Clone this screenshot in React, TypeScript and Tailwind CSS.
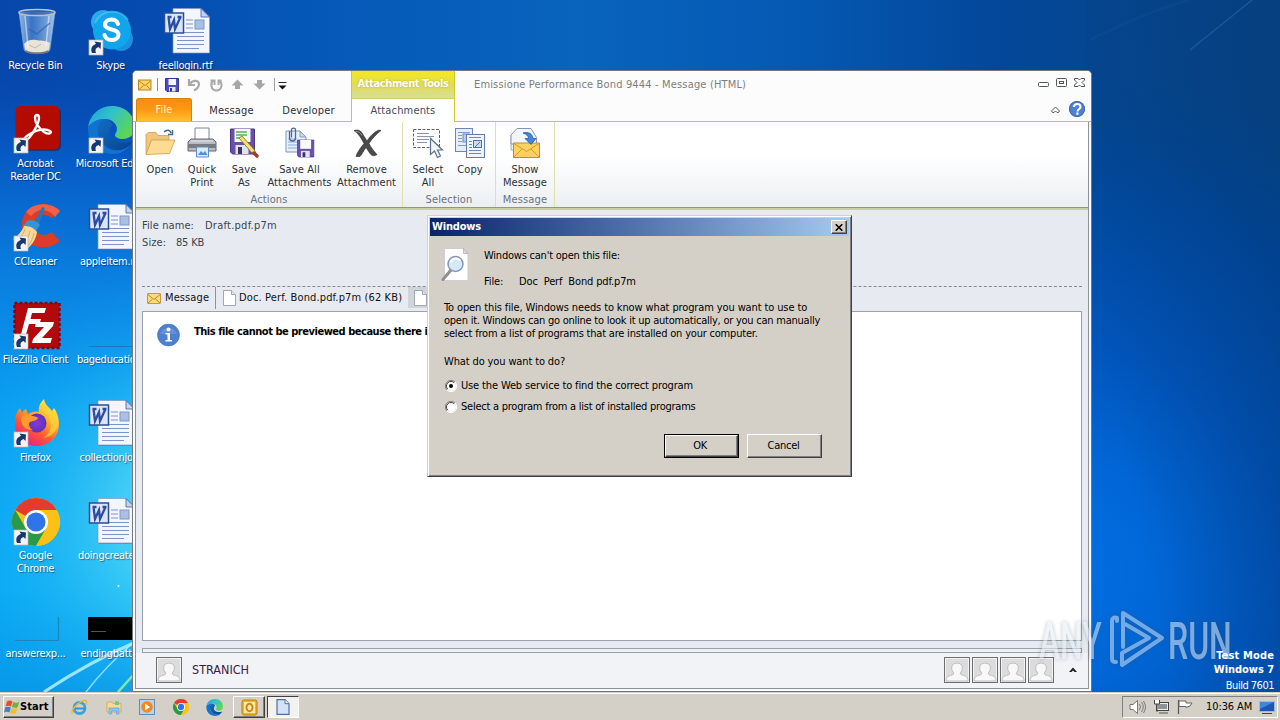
import type { ReactNode } from "react";

/* ---------- shared bits ---------- */

function Shortcut() {
  return (
    <g>
      <rect x="2" y="32" width="14" height="15" fill="#f4f4f4" stroke="#b8b8b8" strokeWidth=".7" />
      <path d="M5 45c-2-5 .5-8 4-9l-1.500-2.500 6.500 1-.5 6.500-2-2C8.500 40 8 42 9 45z" fill="#17376e" />
    </g>
  );
}

function Svg48({ children }: { children?: ReactNode }) {
  return (
    <svg width="48" height="48" viewBox="0 0 48 48" className="block shrink-0 overflow-visible">
      {children}
    </svg>
  );
}

function RecycleBin() {
  return (
    <Svg48>
      <defs>
        <linearGradient id="bin" x1="0" x2="1">
          <stop offset="0" stopColor="#b9d3ef" stopOpacity=".8" />
          <stop offset=".35" stopColor="#4f86cf" stopOpacity=".7" />
          <stop offset=".7" stopColor="#7fa9dd" stopOpacity=".8" />
          <stop offset="1" stopColor="#cfe2f5" stopOpacity=".8" />
        </linearGradient>
      </defs>
      <path d="M7 4h36l-5 37c-.5 3-3 4-13 4s-12.500-1-13-4z" fill="url(#bin)" stroke="#8fb0d4" strokeWidth=".6" />
      <path d="M12 36c3-4 8-5 12-4s9 0 14 3l-1 6c-1 3-5 4-12 4s-11-1-12-4z" fill="#e9e4da" />
      <path d="M17 37l6 3 6-4" stroke="#c2b8a6" fill="none" />
      <path d="M13 8l3 32M37 8l-3 30" stroke="#ffffff" strokeOpacity=".5" strokeWidth="1.500" />
      <path d="M17 21l8 5 8-7 5-4" stroke="#2f62b0" strokeOpacity=".7" fill="none" strokeWidth="1.500" />
      <ellipse cx="25" cy="4.500" rx="18" ry="3" fill="#2d5ea6" fillOpacity=".6" stroke="#b9c3cf" strokeWidth="1.500" />
      <path d="M14 43c4 3 18 3 22 0" stroke="#777" strokeWidth="2" fill="none" />
    </Svg48>
  );
}

function Skype() {
  return (
    <Svg48>
      <circle cx="16" cy="14" r="12" fill="#29a8ea" />
      <circle cx="34" cy="31" r="12" fill="#1c8fe0" />
      <circle cx="25" cy="22.500" r="19" fill="#11a5ec" />
      <path d="M8 15a19 19 0 0 1 33-3" stroke="#5cc9f5" strokeWidth="2" fill="none" opacity=".6" />
      <path d="M31 16c-1-3-3.500-4.500-6.500-4.500-3.500 0-6.500 1.700-6.500 5 0 6.500 13.500 3.500 13.500 10 0 3.500-3 5.500-7 5.500-3.500 0-6-1.500-7-5" stroke="#fff" strokeWidth="4" fill="none" strokeLinecap="round" />
      <Shortcut />
    </Svg48>
  );
}

function WordDoc() {
  return (
    <Svg48>
      <path d="M12 1h26l10 8v37H12z" fill="#1b3c78" opacity=".35" />
      <path d="M11 .5h28l8.500 8.500v36H11z" fill="#f3f6fd" stroke="#8296c4" strokeWidth=".7" />
      <path d="M39 .5v8.500h8.500z" fill="#c4d3ef" stroke="#3e5a9c" strokeWidth=".8" />
      <rect x="33" y="12" width="9" height="9" fill="#aabfe4" stroke="#7f97c8" />
      <path d="M24 12h7M24 16h7M24 20h7M15 24.500h27M15 28.500h27M15 32.500h27M15 36.500h27M15 40.500h22" stroke="#7d93c9" strokeWidth="1" />
      <rect x="2.500" y="5" width="19" height="20" fill="#dbe5f8" stroke="#2c4c9b" strokeWidth="1.500" />
      <path d="M5.500 9h4M6.500 9l1.500 12L12 12l1 9 5.500-12M15.500 9h4" stroke="#2c4da2" strokeWidth="2.300" fill="none" />
    </Svg48>
  );
}

function Acrobat() {
  return (
    <Svg48>
      <rect x="5" y="2" width="44" height="43" rx="5" fill="#3a1020" opacity=".5" />
      <rect x="3.500" y="0" width="44" height="43" rx="5" fill="#b30b00" />
      <path d="M12 33c2-4 7-6 12-8s11-2 14 0-2 4-6 1c-5-4-9-9-9-14 0-4 4-4 4 0 0 5-5 14-10 20-2 2-5 3-5 1z" fill="none" stroke="#fff" strokeWidth="2.300" strokeLinejoin="round" />
      <Shortcut />
    </Svg48>
  );
}

function EdgeArt() {
  return (
    <g>
      <defs>
        <linearGradient id="edgeTop" x1="0" y1="0" x2="1" y2=".5">
          <stop offset="0" stopColor="#1b9de2" />
          <stop offset=".5" stopColor="#33c2c8" />
          <stop offset="1" stopColor="#5cd653" />
        </linearGradient>
        <linearGradient id="edgeLow" x1="0" y1="0" x2="1" y2="1">
          <stop offset="0" stopColor="#0f6fc4" />
          <stop offset="1" stopColor="#0a3f8e" />
        </linearGradient>
      </defs>
      <path d="M1 21C3 8 13 0 25 0c14 0 23 10 23 21 0 7-5 12-12 12-5 0-8-2-8-4s2-3 2-6c0-5-5-10-12-10-8 0-14 5-17 8z" fill="url(#edgeTop)" />
      <path d="M1 21c3-4 8-8 16-8-4 2-6 7-6 12 0 9 7 17 15 19 6 1 12-1 17-5-4 6-10 9-17 9C12 48 1 37 1 24z" fill="#1173cf" />
      <path d="M17 13c-5 2-7 8-6 14 2 9 8 16 17 17s15-4 18-9c-9 4-20 1-23-5-2-5 0-8 3-11-2-4-5-6-9-6z" fill="url(#edgeLow)" />
    </g>
  );
}

function EdgeIcon() {
  return (
    <Svg48>
      <EdgeArt />
      <Shortcut />
    </Svg48>
  );
}

function CCleaner() {
  return (
    <Svg48>
      <path d="M48 7C38-3 21-1 14 8c-6 8-6 20 0 28 8 9 24 10 34 1l-8-9c-5 4-11 4-15 0-4-5-4-10 0-15 4-3 10-3 14 1z" fill="#dc3d27" />
      <path d="M48 7C38-3 21-1 14 8l5 4c7-8 17-8 24 1z" fill="#f0604a" />
      <path d="M30 3l3 1-7 19-5-2z" fill="#2b74b8" />
      <path d="M15 17c4-2 11 0 13 4l-4 6c-3-3-8-5-13-5z" fill="#3793d2" />
      <path d="M12 22c6 0 10 2 13 6-1 7-5 13-10 17-4-5-9-8-14-10 5-3 9-8 11-13z" fill="#f5d99a" />
      <path d="M13 25c-2 6-5 9-8 12M18 27c-1 6-4 10-7 13M22 29c-1 5-3 9-6 13" stroke="#d9ae5a" strokeWidth="1" fill="none" />
      <Shortcut />
    </Svg48>
  );
}

function FileZilla() {
  return (
    <Svg48>
      <rect x="2.500" y="1" width="45" height="45" fill="#b3080c" stroke="#8b0508" strokeWidth="2.500" strokeDasharray="3 2" />
      <path d="M16 6h18l-1.500 5H20l-1.500 6H29l-1.500 5H17l-4 14H8z" fill="#fff" />
      <path d="M24 20h18l-1 4-11 12h10l-1.500 5H20l1-4 11-12h-9z" fill="#fff" />
      <Shortcut />
    </Svg48>
  );
}

function Firefox() {
  return (
    <Svg48>
      <defs>
        <linearGradient id="fox" x1=".8" y1="0" x2=".2" y2="1">
          <stop offset="0" stopColor="#fff44f" />
          <stop offset=".35" stopColor="#ffb52a" />
          <stop offset=".65" stopColor="#ff5634" />
          <stop offset="1" stopColor="#e3168f" />
        </linearGradient>
        <radialGradient id="globe">
          <stop offset="0" stopColor="#8a35e0" />
          <stop offset="1" stopColor="#5b34b5" />
        </radialGradient>
      </defs>
      <path d="M3 20c0-5 2-8 5-12l2 5c1-2 2-3 4-4l2 5c3-2 8-3 11-2-1-5 1-9 5-13 1 6 5 8 8 12l2-3c3 4 5 10 5 16 0 13-10 22-22 22S3 37 3 25z" fill="url(#fox)" />
      <circle cx="25" cy="23" r="9.500" fill="url(#globe)" />
      <path d="M9 17c4-3 8-3 11-1 3 0 5 1 6 2-1 3-6 3-8 4-2 2-1 6 3 8-7 1-13-5-12-13z" fill="#ff9a2e" />
      <path d="M30 4c0 8 9 11 9 21 0 6-4 11-8 13 9-1 15-8 15-16 0-8-8-10-10-14z" fill="#ffd33d" opacity=".75" />
      <Shortcut />
    </Svg48>
  );
}

function ChromeArt() {
  return (
    <g>
      <circle cx="24" cy="24" r="24" fill="#fbc116" />
      <path d="M24 24L3.200 12A24 24 0 0 1 44.800 12z" fill="#e33b2e" />
      <path d="M3.200 12A24 24 0 0 0 24 48L34.500 30 24 24 13.600 30z" fill="#2a9a48" />
      <path d="M24 12h20.800A24 24 0 0 1 24 48l10.400-18z" fill="#fbc116" />
      <circle cx="24" cy="24" r="12" fill="#fff" />
      <circle cx="24" cy="24" r="9.500" fill="#2f74e8" />
    </g>
  );
}

function ChromeIcon() {
  return (
    <Svg48>
      <ChromeArt />
      <Shortcut />
    </Svg48>
  );
}

/* ---------- desktop ---------- */

type DesktopItem = { label: string; icon: ReactNode };

const columns: DesktopItem[][] = [
  [
    { label: "Recycle Bin", icon: <RecycleBin /> },
    { label: "Acrobat\nReader DC", icon: <Acrobat /> },
    { label: "CCleaner", icon: <CCleaner /> },
    { label: "FileZilla Client", icon: <FileZilla /> },
    { label: "Firefox", icon: <Firefox /> },
    { label: "Google\nChrome", icon: <ChromeIcon /> },
    {
      label: "answerexp...",
      icon: (
        <Svg48>
          <path d="M3 44.500h44M46.500 21v23" stroke="#1c86b8" strokeWidth="1.200" />
        </Svg48>
      ),
    },
  ],
  [
    { label: "Skype", icon: <Skype /> },
    { label: "Microsoft Edge", icon: <EdgeIcon /> },
    { label: "appleitem.rtf", icon: <WordDoc /> },
    {
      label: "bageducatio...",
      icon: (
        <Svg48>
          <path d="M2 44.500h45" stroke="#1479bd" strokeWidth="1.200" />
        </Svg48>
      ),
    },
    { label: "collectionjo...", icon: <WordDoc /> },
    { label: "doingcreate...", icon: <WordDoc /> },
    {
      label: "endingbatt...",
      icon: (
        <Svg48>
          <rect x="1" y="21" width="46" height="23" fill="#000" />
          <path d="M4 35.500h15" stroke="#555" />
        </Svg48>
      ),
    },
  ],
  [{ label: "feellogin.rtf", icon: <WordDoc /> }],
];

function Wallpaper() {
  return (
    <svg width="1280" height="692" viewBox="0 0 1280 692" className="absolute inset-0">
      <defs>
        <linearGradient id="sky" x1="0" x2="1280" gradientUnits="userSpaceOnUse">
          <stop offset="0" stopColor="#0747ab" />
          <stop offset=".12" stopColor="#054bb0" />
          <stop offset=".2" stopColor="#0555b6" />
          <stop offset=".45" stopColor="#0864bd" />
          <stop offset=".62" stopColor="#0559b3" />
          <stop offset=".78" stopColor="#03479a" />
          <stop offset="1" stopColor="#0b4680" />
        </linearGradient>
        <linearGradient id="leftSky" y2="692" gradientUnits="userSpaceOnUse" x2="0">
          <stop offset="0" stopColor="#0747ab" stopOpacity="0" />
          <stop offset=".1" stopColor="#074bb1" stopOpacity="0" />
          <stop offset=".2" stopColor="#0655c0" />
          <stop offset=".4" stopColor="#0a7fe0" />
          <stop offset=".6" stopColor="#089ff2" />
          <stop offset=".85" stopColor="#08aaf5" />
          <stop offset="1" stopColor="#0798e8" />
        </linearGradient>
        <radialGradient id="leftGlow" cx="190" cy="520" r="260" gradientUnits="userSpaceOnUse">
          <stop offset="0" stopColor="#66e4fa" />
          <stop offset=".3" stopColor="#4cd6f6" stopOpacity=".75" />
          <stop offset=".7" stopColor="#22b8f5" stopOpacity=".3" />
          <stop offset="1" stopColor="#10a0f0" stopOpacity="0" />
        </radialGradient>
        <radialGradient id="rightSky" cx="1060" cy="570" r="500" gradientUnits="userSpaceOnUse">
          <stop offset="0" stopColor="#0270e4" />
          <stop offset=".22" stopColor="#0166d6" />
          <stop offset=".45" stopColor="#0155bb" />
          <stop offset=".75" stopColor="#014a9f" />
          <stop offset="1" stopColor="#024590" stopOpacity="0" />
        </radialGradient>
        <linearGradient id="rightEdge" x1="1090" x2="1280" y1="300" y2="260" gradientUnits="userSpaceOnUse">
          <stop offset="0" stopColor="#003a80" stopOpacity="0" />
          <stop offset="1" stopColor="#003a80" stopOpacity=".5" />
        </linearGradient>
      </defs>
      <rect width="1280" height="692" fill="url(#sky)" />
      <rect y="70" width="140" height="622" fill="url(#leftSky)" />
      <rect y="240" width="140" height="452" fill="url(#leftGlow)" />
      <rect x="1085" y="70" width="195" height="622" fill="url(#rightSky)" />
      <rect x="1085" width="195" height="692" fill="url(#rightEdge)" />
      <path d="M44 692q45-30 92-50" stroke="#bff4ff" strokeWidth="3" fill="none" opacity=".8" />
      <path d="M86 692q20-26 48-50" stroke="#a5efff" strokeWidth="1.500" fill="none" opacity=".8" />
      <path d="M118 692l18-20" stroke="#8ff0a0" strokeWidth="2.500" opacity=".9" />
      <path d="M1190 50L1252 0" stroke="#5a9bd0" strokeWidth="1.500" opacity=".25" />
      <path d="M1090 40q60-30 100-40" stroke="#3a7cc0" strokeWidth="3" fill="none" opacity=".08" />
      <circle cx="118.500" cy="586" r="1" fill="#d7fbff" />
    </svg>
  );
}

function DesktopIcons() {
  return (
    <div className="relative -ml-0.5 flex">
      {columns.map((col, i) => (
        <div key={i} className="flex w-[75px] flex-col">
          {col.map((item) => (
            <div key={item.label} className="flex h-[98px] flex-col items-center pt-2">
              {item.icon}
              <span className="mt-[3px] text-center text-[11px] leading-[13px] tracking-[-0.25px] whitespace-pre text-white [text-shadow:1px_1px_1px_rgba(0,0,0,0.45)]">
                {item.label}
              </span>
            </div>
          ))}
        </div>
      ))}
    </div>
  );
}

/* ---------- ribbon icons ---------- */

function Svg32({ children }: { children: ReactNode }) {
  return (
    <svg width="32" height="32" viewBox="0 0 32 32" className="block shrink-0">
      {children}
    </svg>
  );
}

function FloppyShape({ x, y, s }: { x: number; y: number; s: number }) {
  return (
    <g transform={`translate(${x} ${y}) scale(${s})`}>
      <path d="M0 0h24v25H2l-2-2z" fill="#6b4fa8" stroke="#4c3585" />
      <rect x="4" y="0" width="16" height="13" fill="#f4fbf4" />
      <rect x="5" y="16" width="13" height="9" fill="#dfe3ee" />
      <rect x="7.500" y="18" width="4" height="7" fill="#3f3560" />
    </g>
  );
}

const icons = {
  open: (
    <Svg32>
      <path d="M2 27V7.500l2-2h8l2 3h11v4z" fill="#efc67c" stroke="#cf9f52" strokeWidth=".8" />
      <path d="M7.500 13H31l-5.500 13.500L2 27.500z" fill="#fcdc93" stroke="#cf9a45" strokeWidth=".8" />
      <path d="M20 5c3-3 6-2 7 1M28.500 3v4.500H24" stroke="#44698f" strokeWidth="1.500" fill="none" />
    </Svg32>
  ),
  print: (
    <Svg32>
      <path d="M9 1h14v12H9z" fill="#fff" stroke="#7d8694" />
      <path d="M5 12h22l3 3v9H2v-9z" fill="#b9bcc2" stroke="#62666d" />
      <path d="M2 17h28v4H2z" fill="#777b82" />
      <path d="M5 14h22" stroke="#e8eaee" />
      <path d="M10.500 20h12v10h-12z" fill="#d7ebfb" stroke="#5f8fbf" />
      <path d="M12 28l3-4 2 2 2-2 2.500 4z" fill="#4d95d9" />
    </Svg32>
  ),
  saveAs: (
    <Svg32>
      <FloppyShape x={2.500} y={2} s={1} />
      <path d="M8 5h11M8 8h11M8 11h8" stroke="#54b060" strokeWidth="1.500" />
      <path d="M11 11l13 15 4 1.500-1.500-4.500L14 9z" fill="#f8e073" stroke="#8f7420" strokeWidth=".9" />
      <path d="M26 26l3 3" stroke="#a03b28" strokeWidth="3.500" strokeLinecap="round" />
    </Svg32>
  ),
  saveAll: (
    <Svg32>
      <path d="M2 4h14l6 6v15H2z" fill="#e8f0fb" stroke="#7c93ba" />
      <path d="M4 12h9M4 15h9M4 18h9M4 21h9" stroke="#8ca8d3" />
      <path d="M16 4v6h6z" fill="#c5d5ef" stroke="#7c93ba" strokeWidth=".8" />
      <path d="M5.500 4v7c0 4 6 4 6 0V3c0-2.500-4-2.500-4 0v7.500" stroke="#4c6891" strokeWidth="1.300" fill="none" />
      <FloppyShape x={13.500} y={13} s={0.68} />
    </Svg32>
  ),
  remove: (
    <Svg32>
      <path d="M3 3.500c4-1 6-.5 8 2.500l5 8c3-5 7-9 12-11l2 .5c-5 4-9 8-12 13 2 4 5 8 8 11-3 2-5 1.500-7-1l-4-6c-3 4-4 7-6 9H5c1-4 4-8 8-13C10 11 8 7 3 3.500z" fill="#4a4a4a" stroke="#2e2e2e" strokeWidth=".6" />
      <path d="M5 4.500c3 0 4 1 6 4" stroke="#999" fill="none" />
    </Svg32>
  ),
  select: (
    <Svg32>
      <rect x="1.500" y="2.500" width="26" height="18" fill="#fff" stroke="#59606c" strokeDasharray="3 1.500" />
      <path d="M5 6.500h12M5 9.500h17M5 12.500h12M5 15.500h10" stroke="#8a95aa" />
      <path d="M18.500 11.500v16l4-3.500 3 6.500 3-1.500-3-6h5z" fill="#f2f5fb" stroke="#59708f" strokeWidth="1.200" />
    </Svg32>
  ),
  copy: (
    <Svg32>
      <rect x="1.500" y="1.500" width="17" height="23" fill="#e5eefa" stroke="#6c87ae" />
      <path d="M4 5.500h12M4 8.500h4M4 11.500h4M4 14.500h4M4 18.500h8" stroke="#809cc4" />
      <rect x="9" y="7" width="6" height="8" fill="#b8cdec" stroke="#5a7aa8" strokeWidth=".8" />
      <rect x="12.500" y="7.500" width="18" height="23" fill="#f0f5fd" stroke="#5f7ba6" />
      <path d="M15 10.500h12M15 23.500h12M15 26.500h12M15 14.500h3M15 17.500h3M15 20.500h3" stroke="#6c8ab8" />
      <rect x="19.500" y="13.500" width="8" height="7" fill="#c9daf2" stroke="#54739f" />
      <path d="M21 20l5-5" stroke="#54739f" />
    </Svg32>
  ),
  show: (
    <Svg32>
      <path d="M2 8v15h4V15z" fill="#e8eef8" stroke="#8b9cb8" strokeWidth=".8" />
      <path d="M8 1.500h14l5.500 9V17H2V8z" fill="#f2f6fc" stroke="#8796b0" />
      <path d="M4.500 16h26v14.500h-26z" fill="#fbd25d" stroke="#c28d28" />
      <path d="M5 16.500l12.500 8 12.500-8M5 30l8-8M30 30l-8-8" stroke="#cf9a30" fill="none" />
      <path d="M14 6c6-1.500 9.500 1 10 5.500h3L22 17.500l-6-6h3.500c0-2.500-2-4.500-5.500-5.500z" fill="#4384dc" stroke="#2457a8" strokeWidth=".8" />
    </Svg32>
  ),
};

function MailIcon() {
  return (
    <svg width="14" height="12" viewBox="0 0 14 12" className="block shrink-0">
      <rect x=".5" y=".5" width="13" height="10" rx=".5" fill="#fbdc7c" stroke="#c49a3e" />
      <path d="M1 1.500l6 5 6-5M1 10l4.500-4M13 10L8.500 6" stroke="#b77f1d" fill="none" strokeWidth=".9" />
    </svg>
  );
}

function PageIcon() {
  return (
    <svg width="13" height="16" viewBox="0 0 13 16" className="block shrink-0">
      <path d="M.5.500h8l4 4v11H.5z" fill="#fff" stroke="#a3a8b0" />
      <path d="M8.500.500v4h4" fill="#e4e6ea" stroke="#a3a8b0" />
    </svg>
  );
}

/* ---------- message window ---------- */

function RibbonButton({ icon, lines, width }: { icon: ReactNode; lines: string[]; width: string }) {
  return (
    <button className={`flex flex-col items-center ${width}`}>
      {icon}
      <span className="mt-1 flex flex-col items-center whitespace-nowrap text-[11px] leading-[13px] tracking-[0.1px] text-[#2c2f36]">
        {lines.map((l) => (
          <span key={l}>{l}</span>
        ))}
      </span>
    </button>
  );
}

function RibbonGroup({ title, width, pad, children }: { title: string; width: string; pad: string; children: ReactNode }) {
  return (
    <div className={`flex h-full shrink-0 flex-col border-r border-[#dfe0b0] ${width}`}>
      <div className={`flex h-[71px] pt-[5px] ${pad}`}>{children}</div>
      <div className="text-center text-[11px] leading-[14px] tracking-[0.15px] text-[#67717f]">{title}</div>
    </div>
  );
}

function QuickAccess() {
  return (
    <div className="flex h-[27px] items-center pl-[5px]">
      <svg width="160" height="16" viewBox="0 0 160 16" className="block">
        <g transform="translate(0 2.500)">
          <rect x=".5" y=".5" width="12.500" height="10" fill="#fbd465" stroke="#b98724" />
          <path d="M1 1.500l6 4.500 5.500-4.500M1 10l4.500-4M12.500 10L8.500 6" stroke="#b77f1d" fill="none" strokeWidth=".9" />
        </g>
        <path d="M19.500 1v13" stroke="#8b8f96" />
        <path d="M27.500 1.500h13v13H29l-1.500-1.500z" fill="#4b50b8" stroke="#33378e" />
        <rect x="30.500" y="2" width="7.500" height="6" fill="#f5f6fc" />
        <rect x="31" y="10" width="6.500" height="4.500" fill="#e2e4f0" />
        <rect x="32" y="11" width="2" height="3.500" fill="#33378e" />
        <path d="M51 2v6h6M51.500 7.500C54 3 61 2.500 61 7c0 3-2 5-5 6.500" stroke="#a9a9a9" strokeWidth="2.200" fill="none" />
        <path d="M75 3.500c-3 3-2 9.500 3 10s7.500-6 3.500-9.500M72.500 3.500h4V8M80.500 8V3.500h3" stroke="#a9a9a9" strokeWidth="2" fill="none" />
        <path d="M99.500 2.500l6 6h-3.500v3.500h-5V8.500h-3.500z" fill="#a6a6a6" />
        <path d="M121.500 12.500l6-6h-3.500V3h-5v3.500h-3.500z" fill="#a6a6a6" />
        <path d="M136.500 1v13" stroke="#9a9da3" />
        <path d="M140.500 5.500h8" stroke="#222" strokeWidth="1.200" />
        <path d="M140.500 8.500h8l-4 4z" fill="#111" />
      </svg>
    </div>
  );
}

function TitleArea() {
  return (
    <div className="flex h-[51px] shrink-0 bg-[#fcfcfd] text-[11px] tracking-[0.15px]">
      <div className="flex w-[218px] flex-col border-b border-[#cdc92a]">
        <QuickAccess />
        <div className="flex flex-1 items-stretch pl-[3px] text-[#2c2f36]">
          <div className="flex w-14 items-center justify-center rounded-t-[3px] border border-b-0 border-[#d98008] bg-linear-to-b from-[#fb8a12] via-[#fd9a12] to-[#ffc02e] pt-px text-[#fff3d0]">
            File
          </div>
          <div className="flex w-[79px] items-center justify-center pt-[3px]">Message</div>
          <div className="flex w-[75px] items-center justify-center pt-[3px]">Developer</div>
        </div>
      </div>
      <div className="flex w-[104px] flex-col border-x border-[#cdc92a]">
        <div className="h-7 shrink-0 border-b border-[#d3cf62] bg-linear-to-b from-[#f5e90f] via-[#e2dc50] to-[#d9de96] text-center text-[11px] leading-[25px] font-bold tracking-[-0.38px] text-white [text-shadow:0_0_2px_rgba(150,140,20,0.6)]">
          Attachment Tools
        </div>
        <div className="flex flex-1 items-center justify-center bg-white pt-px text-[#3f4a5c]">Attachments</div>
      </div>
      <div className="flex flex-1 justify-between border-b border-[#cdc92a] pl-[19px]">
        <span className="text-[11px] leading-[27px] tracking-[0.16px] whitespace-pre text-[#7c7c7c]">
          Emissione Performance Bond 9444 - Message (HTML)
        </span>
        <svg width="54" height="50" viewBox="0 0 54 50" className="block shrink-0">
          <g fill="#fff" stroke="#50545c">
            <rect x="1.500" y="11.500" width="10" height="4" rx="1" />
            <rect x="19.500" y="7.500" width="10" height="8" rx="1" />
            <rect x="22.500" y="10.500" width="4" height="2" />
            <path d="M37.500 7.500h3.500l1.500 1.500 1.500-1.500h3.500v1.500l-2.500 2.500 2.500 2.500v1.500H44l-1.500-1.500-1.500 1.500h-3.500V14l2.500-2.500-2.500-2.500z" />
            <path d="M14.500 40l4-4 4 4-1 1.500h-1.500l-1.500-1.500-1.500 1.500h-1.500z" />
          </g>
          <circle cx="40" cy="38" r="8" fill="#4d83cc" />
          <circle cx="40" cy="38" r="7.500" fill="none" stroke="#3c6db4" />
          <path d="M37 36c0-4 6.500-4 6.500 0 0 2-3 2-3 4.500" stroke="#fff" strokeWidth="2" fill="none" />
          <rect x="39.300" y="41.500" width="2.200" height="2.200" fill="#fff" />
        </svg>
      </div>
    </div>
  );
}

function Avatar() {
  return (
    <svg width="26" height="26" viewBox="0 0 26 26" className="block shrink-0">
      <rect x=".5" y=".5" width="25" height="25" fill="#dcdcdc" stroke="#6e6e6e" />
      <rect x="1.500" y="1.500" width="23" height="23" fill="none" stroke="#f3f3f3" />
      <path d="M2 24c0-4 2-5 6-6 2-.5 2-2 1-3-2-2-2.500-9 4-9s6 7 4 9c-1 1-1 2.500 1 3 4 1 6 2 6 6z" fill="#f8f8f8" stroke="#b5b5b5" strokeWidth=".9" />
    </svg>
  );
}

function MessageWindow() {
  return (
    <div className="absolute top-[70px] left-[132px] flex h-[622px] w-[960px] flex-col overflow-hidden rounded-t-[5px] border border-[#71777f] bg-[#fbfbfc]">
      <TitleArea />
      <div className="mx-0.5 mb-0.5 flex flex-1 flex-col border border-t-0 border-[#8c929b] bg-[#e7ebf1]">
        <div className="flex h-[88px] shrink-0 border-b-[3px] border-[#c9d0a2] bg-linear-to-b from-white from-40% to-[#eceff2]">
          <div className="flex h-[86px] w-full border-b border-[#8f9a7c]">
            <RibbonGroup title="Actions" width="w-[267px]" pad="pl-[3px]">
              <RibbonButton icon={icons.open} lines={["Open"]} width="w-[42px]" />
              <RibbonButton icon={icons.print} lines={["Quick", "Print"]} width="w-[42px]" />
              <RibbonButton icon={icons.saveAs} lines={["Save", "As"]} width="w-[42px]" />
              <RibbonButton icon={icons.saveAll} lines={["Save All", "Attachments"]} width="w-[69px]" />
              <RibbonButton icon={icons.remove} lines={["Remove", "Attachment"]} width="w-[65px]" />
            </RibbonGroup>
            <RibbonGroup title="Selection" width="w-[93px]" pad="pl-1">
              <RibbonButton icon={icons.select} lines={["Select", "All"]} width="w-[42px]" />
              <RibbonButton icon={icons.copy} lines={["Copy"]} width="w-[42px]" />
            </RibbonGroup>
            <RibbonGroup title="Message" width="w-[59px]" pad="justify-center">
              <RibbonButton icon={icons.show} lines={["Show", "Message"]} width="w-[50px]" />
            </RibbonGroup>
          </div>
        </div>

        <div className="flex h-[76px] shrink-0 flex-col pt-[7px] pl-1.5 text-[11px] leading-[17px] tracking-[0.1px] text-[#3b4350]">
          <div className="flex">
            <span className="w-[63px]">File name:</span>
            <span className="tracking-[0.25px]">Draft.pdf.p7m</span>
          </div>
          <div className="flex">
            <span className="w-[34px]">Size:</span>
            <span className="tracking-[-0.2px]">85 KB</span>
          </div>
        </div>

        <div className="mx-1.5 flex h-[25px] shrink-0 items-start border-t border-dashed border-[#858b96] text-[11px] text-[#111]">
          <div className="flex h-[22px] w-[74px] items-center gap-1 border-r border-[#8d929c] pt-px pl-[5px] tracking-[0.1px]">
            <MailIcon />
            Message
          </div>
          <div className="flex h-[22px] w-[192px] items-center gap-[3px] pl-[7px] tracking-[0.13px] whitespace-nowrap">
            <PageIcon />
            Doc. Perf. Bond.pdf.p7m (62 KB)
          </div>
          <div className="flex h-[21px] w-[80px] items-center bg-[#cfd4d8] pl-1.5">
            <PageIcon />
          </div>
        </div>

        <div className="mx-1.5 h-[330px] shrink-0 overflow-hidden border border-[#9aa1ae] bg-white">
          <div className="flex pt-3 pl-[14px]">
            <svg width="24" height="24" viewBox="0 0 24 24" className="block shrink-0">
              <circle cx="11.500" cy="11" r="11" fill="#4f80cc" stroke="#3f6fba" strokeWidth=".6" />
              <path d="M3 10a9 9 0 0 1 17 0z" fill="#7da2df" opacity=".5" />
              <circle cx="11.500" cy="5.500" r="2" fill="#fff" />
              <path d="M8.500 9h4.500v7h2v1.500h-6.500V16h2v-5.500h-2z" fill="#fff" />
            </svg>
            <span className="ml-[13px] text-[11px] leading-[15px] font-bold tracking-[-0.47px] whitespace-nowrap text-black">
              This file cannot be previewed because there is
            </span>
          </div>
        </div>

        <div className="mx-1.5 mt-[7px] h-[5px] shrink-0 border border-[#9aa1ae] bg-[#eceff4]" />
        <div className="flex flex-1 items-center bg-[#f1f3f7] pr-[11px] pb-px pl-5">
          <Avatar />
          <span className="ml-[10px] text-[12.500px] text-[#401a40]">STRANICH</span>
          <div className="ml-auto flex items-center gap-0.5">
            <Avatar />
            <Avatar />
            <Avatar />
            <Avatar />
            <svg width="8" height="6" viewBox="0 0 8 6" className="ml-[13px] block">
              <path d="M0 5l4-4.500L8 5H5.500L4 3.500 2.500 5z" fill="#222" />
            </svg>
          </div>
        </div>
      </div>
    </div>
  );
}

/* ---------- dialog ---------- */

function Radio({ checked }: { checked?: boolean }) {
  return (
    <svg width="12" height="12" viewBox="0 0 12 12" className="block shrink-0">
      <circle cx="6" cy="6" r="5" fill="#fff" />
      <path d="M10 2A5.500 5.500 0 1 0 2 10" fill="none" stroke="#808080" />
      <path d="M9.200 2.800A4.500 4.500 0 1 0 2.800 9.200" fill="none" stroke="#404040" />
      <path d="M10 2A5.500 5.500 0 0 1 2 10" fill="none" stroke="#fff" />
      {checked && <circle cx="6" cy="6" r="2" fill="#000" />}
    </svg>
  );
}

const raised = "border border-t-white border-l-white border-r-[#404040] border-b-[#404040] shadow-[inset_-1px_-1px_0_#808080]";

function Dialog() {
  return (
    <div className="absolute top-[215px] left-[427px] flex h-[262px] w-[425px] flex-col border border-t-[#d4d0c8] border-r-[#404040] border-b-[#404040] border-l-[#d4d0c8] bg-[#d4d0c8] p-0.5 text-[11px] text-black shadow-[inset_1px_1px_0_#fff,inset_-1px_-1px_0_#808080]">
      <div className="flex h-[18px] shrink-0 items-center justify-between bg-linear-to-r from-[#0a246a] to-[#a6caf0] pr-0.5 pl-0.5">
        <span className="pt-px font-bold tracking-[-0.2px] text-white">Windows</span>
        <button className={`flex h-[14px] w-4 items-center justify-center bg-[#d4d0c8] ${raised}`}>
          <svg width="8" height="7" viewBox="0 0 8 7" className="block">
            <path d="M.7.3l6.600 6.400M7.300.3L.7 6.700" stroke="#000" strokeWidth="1.600" />
          </svg>
        </button>
      </div>
      <div className="flex flex-1 flex-col pr-[27px] pl-[14px]">
        <div className="flex pt-3">
          <svg width="30" height="34" viewBox="0 0 30 34" className="-ml-[3px] block shrink-0">
            <path d="M3.500.500h19l4.500 5v27H3.500z" fill="#fff" stroke="#c8c8c8" strokeWidth=".8" />
            <path d="M22.500.500v5H27z" fill="#dcdcdc" stroke="#aaa" strokeWidth=".7" />
            <path d="M10 22l-8 9.500" stroke="#8b8f96" strokeWidth="3" strokeLinecap="round" />
            <circle cx="14.500" cy="16" r="7.500" fill="#d5e8fb" stroke="#8797ab" strokeWidth="1.500" />
            <path d="M9.500 14.500a5.500 5.500 0 0 1 9.500-2" stroke="#fff" strokeWidth="2" fill="none" />
          </svg>
          <div className="ml-[13px] pt-px leading-[13px]">
            <div className="tracking-[-0.22px]">Windows can't open this file:</div>
            <div className="mt-[13px] flex">
              <span className="w-[35px] tracking-[-0.1px]">File:</span>
              <span className="tracking-[-0.14px] whitespace-pre">Doc  Perf  Bond pdf.p7m</span>
            </div>
          </div>
        </div>
        <div className="mt-[13px] flex flex-col leading-[13px] whitespace-nowrap">
          <span className="tracking-[-0.12px]">To open this file, Windows needs to know what program you want to use to</span>
          <span className="tracking-[-0.24px]">open it. Windows can go online to look it up automatically, or you can manually</span>
          <span className="tracking-[-0.2px]">select from a list of programs that are installed on your computer.</span>
        </div>
        <div className="mt-[15px] leading-[13px] tracking-[-0.13px]">What do you want to do?</div>
        <label className="mt-[11px] flex items-center gap-1 pl-px leading-[13px] tracking-[-0.14px]">
          <Radio checked />
          Use the Web service to find the correct program
        </label>
        <label className="mt-2 flex items-center gap-1 pl-px leading-[13px] tracking-[-0.24px]">
          <Radio />
          Select a program from a list of installed programs
        </label>
        <div className="mt-[21px] flex justify-end gap-2">
          <div className="h-6 w-[75px] border border-black">
            <button className={`flex h-full w-full items-center justify-center pr-[3px] ${raised}`}>
              <span className="tracking-[-0.5px]">OK</span>
            </button>
          </div>
          <button className={`flex h-6 w-[75px] items-center justify-center pr-[2px] ${raised}`}>
            <span className="tracking-[-0.25px]">Cancel</span>
          </button>
        </div>
      </div>
    </div>
  );
}

/* ---------- overlay marks ---------- */

function Watermark() {
  return (
    <svg
      width="200"
      height="70"
      viewBox="0 0 200 70"
      className="absolute top-[605px] left-[1036px] overflow-visible opacity-55 drop-shadow-[0_0_2px_rgba(60,70,80,0.6)]"
    >
      <g fill="#e3edf6" fontFamily="Roboto, sans-serif" fontSize="52" fontWeight="500">
        <text transform="translate(3 54) scale(.58 1)" textLength="108" lengthAdjust="spacingAndGlyphs">
          ANY
        </text>
        <text transform="translate(132 54) scale(.58 1)" textLength="110" lengthAdjust="spacingAndGlyphs">
          RUN
        </text>
      </g>
      <g fill="none" stroke="#cfe2f5" strokeWidth="4" strokeLinejoin="round" strokeLinecap="round">
        <path d="M87 42V8l39 25-40 27V48l27-15-24-14" />
        <path d="M81 16v-3c-3-1-5 0-5 3v38c0 2 1 3 4 3" />
      </g>
    </svg>
  );
}

function BuildInfo() {
  return (
    <div className="absolute right-[6px] -bottom-[2px] flex flex-col items-end text-[11px] leading-[14px] text-white">
      <span className="font-bold tracking-[0.15px]">Test Mode</span>
      <span className="font-bold tracking-[-0.05px]">Windows 7</span>
      <span className="leading-[17px] tracking-[-0.5px]">Build 7601</span>
    </div>
  );
}

/* ---------- taskbar ---------- */

function Taskbar() {
  return (
    <div className="flex h-7 items-center border-t border-[#d4d0c8] bg-[#d4d0c8] pt-px pr-[2px] pl-[3px] text-[11px] text-black shadow-[inset_0_1px_0_#fff]">
      <button className={`flex h-[22px] w-[51px] items-center ${raised}`}>
        <svg width="16" height="16" viewBox="0 0 16 16" className="block shrink-0">
          <path d="M3 2.500c2-1.500 4-1 5.500 0L7 7.500C5.500 6.500 3.500 6.500 1.500 7.500z" fill="#e2512a" />
          <path d="M9.300 3c2 1 4 1 6-.5L13.800 8c-2 1.200-4 1-6 0z" fill="#6cb33f" />
          <path d="M1.300 8.300c2-1 4-.8 5.500.2L5.500 13.500C4 12.500 2 12.300 0 13.500z" fill="#3f7fd6" />
          <path d="M7.500 9c2 1 4 1 6-.3L12 14c-2 1.200-4 1-6 0z" fill="#f3be2a" />
        </svg>
        <span className="font-bold tracking-[0.1px]">Start</span>
      </button>
      <div className="ml-[17px] flex items-center gap-[17.500px]">
        <svg width="17" height="17" viewBox="0 0 17 17" className="block">
          <circle cx="8.500" cy="9" r="5.500" fill="none" stroke="#3aa2e0" strokeWidth="2.800" />
          <path d="M4 9.500h10" stroke="#2f95d8" strokeWidth="2" />
          <path d="M1.500 14.500C-1 11 9 1 14.500 1.500c2 .5 1 3 0 4.500" stroke="#e9b93a" strokeWidth="1.400" fill="none" />
        </svg>
        <svg width="16" height="16" viewBox="0 0 16 16" className="block">
          <path d="M1 3h5l1 1.500h8V13H1z" fill="#f5dc8c" stroke="#cfa64a" strokeWidth=".8" />
          <path d="M9 2l4 .5V6H9z" fill="#7cc38a" />
          <path d="M3 9h10v6h-2.500v-3h-5v3H3z" fill="#8fc5ee" stroke="#5a9bd0" strokeWidth=".6" />
        </svg>
        <svg width="16" height="16" viewBox="0 0 16 16" className="block">
          <rect x=".5" y=".5" width="15" height="15" fill="#b6d4ee" stroke="#5a8fc4" />
          <circle cx="8" cy="8" r="5.800" fill="#f08a1c" />
          <path d="M6 4.500l5 3.500-5 3.500z" fill="#fff" />
        </svg>
        <svg width="16" height="16" viewBox="0 0 48 48" className="block">
          <ChromeArt />
        </svg>
        <svg width="17" height="17" viewBox="0 0 48 48" className="block">
          <EdgeArt />
        </svg>
      </div>
      <div className={`ml-[10px] flex h-[22px] w-8 items-center justify-center ${raised}`}>
        <svg width="17" height="17" viewBox="0 0 17 17" className="block">
          <rect x="1" y="1" width="15" height="15" rx="2" fill="#f0b429" stroke="#bd7f10" />
          <rect x="3" y="3" width="11" height="11" fill="#fde9a8" />
          <ellipse cx="8.500" cy="8.500" rx="3" ry="3.800" fill="none" stroke="#c98a12" strokeWidth="2" />
        </svg>
      </div>
      <div className="ml-0.5 flex h-[22px] w-8 items-center justify-center border border-t-[#404040] border-r-white border-b-white border-l-[#404040] bg-[#f3f2ef]">
        <svg width="14" height="16" viewBox="0 0 14 16" className="block">
          <path d="M1 .7h8l4 4v10.600H1z" fill="#d3e2f6" stroke="#4f6fa3" strokeWidth="1.200" />
          <path d="M9 .7v4h4" fill="#fff" stroke="#4f6fa3" />
        </svg>
      </div>
      <div className="ml-auto flex h-[22px] w-[156px] items-center border border-t-[#808080] border-r-white border-b-white border-l-[#808080] pl-[6px]">
        <svg width="66" height="16" viewBox="0 0 66 16" className="block shrink-0">
          <path d="M1 5.500h3l4.500-4v13l-4.500-4H1z" fill="#fff" stroke="#777" />
          <path d="M10.500 5q2 3 0 6M12.500 3q3.500 5 0 10M14.500 2q4 6 0 12" stroke="#7b7b7b" fill="none" />
          <rect x="27.500" y="3.500" width="12" height="8" fill="#8f9398" stroke="#444" />
          <rect x="28.500" y="4.500" width="10" height="6" fill="none" stroke="#eee" />
          <path d="M30 14h9" stroke="#555" />
          <path d="M25.500 1v4h5V1M28 5v8" stroke="#444" fill="#fff" />
          <path d="M49.500 1v14" stroke="#555" strokeWidth="1.200" />
          <path d="M50 2h7v2h6l-2 3-4 1.500V7.500h-7z" fill="#fff" stroke="#666" />
        </svg>
        <span className="ml-[11px] tracking-[-0.1px] whitespace-nowrap">10:36 AM</span>
        <svg width="16" height="13" viewBox="0 0 16 13" className="ml-[7px] block shrink-0">
          <rect x=".5" y=".5" width="15" height="10" fill="#1d55b4" stroke="#9db9dd" />
          <path d="M1 1h14L1 8z" fill="#3f86dd" />
          <path d="M3 12.500h10" stroke="#444" />
        </svg>
      </div>
    </div>
  );
}

export default function App() {
  return (
    <div className="flex h-[720px] w-[1280px] flex-col overflow-hidden font-['DejaVu_Sans_Condensed','DejaVu_Sans',sans-serif]">
      <div className="relative h-[692px] shrink-0 overflow-hidden">
        <Wallpaper />
        <DesktopIcons />
        <MessageWindow />
        <Dialog />
        <Watermark />
        <BuildInfo />
      </div>
      <Taskbar />
    </div>
  );
}
